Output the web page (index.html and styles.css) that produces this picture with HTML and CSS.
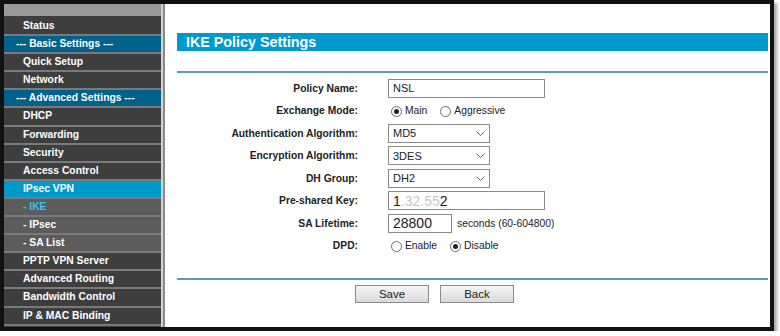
FILE: index.html
```html
<!DOCTYPE html>
<html lang="en">

<head>
  <meta charset="UTF-8" />
  <title>IKE Policy Settings</title>
  <link rel="stylesheet" href="styles.css">
</head>

<body>
  <div class="frame">
    <aside class="menu">
      <div class="menu-top"></div>
      <ul>
        <li>Status</li>
        <li class="group">--- Basic Settings ---</li>
        <li>Quick Setup</li>
        <li>Network</li>
        <li class="group">--- Advanced Settings ---</li>
        <li>DHCP</li>
        <li>Forwarding</li>
        <li>Security</li>
        <li>Access Control</li>
        <li class="active">IPsec VPN</li>
        <li class="sub current">- IKE</li>
        <li class="sub">- IPsec</li>
        <li class="sub">- SA List</li>
        <li>PPTP VPN Server</li>
        <li>Advanced Routing</li>
        <li>Bandwidth Control</li>
        <li>IP &amp; MAC Binding</li>
      </ul>
    </aside>
    <div class="divider"></div>

    <main class="content">
      <h2 class="title">IKE Policy Settings</h2>
      <div class="rule"></div>

      <div class="form">
        <div class="row">
          <span class="name">Policy Name:</span>
          <div class="field wide">NSL</div>
        </div>
        <div class="row">
          <span class="name">Exchange Mode:</span>
          <div class="choices">
            <span class="option"><span class="radio checked"></span>Main</span>
            <span class="option"><span class="radio"></span>Aggressive</span>
          </div>
        </div>
        <div class="row">
          <span class="name">Authentication Algorithm:</span>
          <div class="select"><span>MD5</span><svg width="9" height="5" viewBox="0 0 9 5"><path d="M0.5 0.5 L4.5 4.5 L8.5 0.5" fill="none" stroke="#666" stroke-width="1"/></svg></div>
        </div>
        <div class="row">
          <span class="name">Encryption Algorithm:</span>
          <div class="select"><span>3DES</span><svg width="9" height="5" viewBox="0 0 9 5"><path d="M0.5 0.5 L4.5 4.5 L8.5 0.5" fill="none" stroke="#666" stroke-width="1"/></svg></div>
        </div>
        <div class="row">
          <span class="name">DH Group:</span>
          <div class="select"><span>DH2</span><svg width="9" height="5" viewBox="0 0 9 5"><path d="M0.5 0.5 L4.5 4.5 L8.5 0.5" fill="none" stroke="#666" stroke-width="1"/></svg></div>
        </div>
        <div class="row">
          <span class="name">Pre-shared Key:</span>
          <div class="field wide big">1<span class="hidden">.32.55</span>2</div>
        </div>
        <div class="row">
          <span class="name">SA Lifetime:</span>
          <div class="inline">
            <div class="field short big">28800</div>
            <span class="hint">seconds (60-604800)</span>
          </div>
        </div>
        <div class="row">
          <span class="name">DPD:</span>
          <div class="choices">
            <span class="option"><span class="radio"></span>Enable</span>
            <span class="option"><span class="radio checked"></span>Disable</span>
          </div>
        </div>
      </div>

      <div class="rule bottom"></div>

      <div class="buttons">
        <button class="btn">Save</button>
        <button class="btn">Back</button>
      </div>
    </main>
  </div>
</body>

</html>
```

FILE: styles.css
```css
body {
  margin: 0;
  background: #fff;
  font-family: "Liberation Sans", Arial, sans-serif;
  overflow: hidden;
}

.frame {
  display: flex;
  width: 766px;
  height: 323px;
  border: 4px solid #111;
  background: #fff;
  box-shadow: 3px 3px 3px rgba(0, 0, 0, 0.35);
}

/* left menu */
.menu {
  width: 157px;
  background: #3e3e3e;
  overflow: hidden;
}

.menu-top {
  height: 12px;
  background: #9a9a9a;
  border-bottom: 2px solid #3e3e3e;
}

.menu ul {
  list-style: none;
  margin: 0;
  padding: 0;
}

.menu li {
  height: 16.1px;
  line-height: 16.1px;
  padding-left: 19px;
  border-bottom: 2px solid #7a7a7a;
  background: #3e3e3e;
  color: #fff;
  font-size: 10.3px;
  font-weight: bold;
  white-space: nowrap;
}

.menu li.group {
  padding-left: 12px;
  background: #00618a;
}

.menu li.active {
  background: #0099cc;
}

.menu li.sub {
  background: #5c5c5c;
}

.menu li.current {
  color: #33c4f2;
}

.divider {
  width: 2px;
  background: #d2d2d2;
  border-right: 2px solid #8a8a8a;
}

/* content */
.content {
  flex: 1;
  padding: 29px 2px 0 12px;
}

.title {
  margin: 0;
  height: 18px;
  line-height: 18px;
  padding-left: 9px;
  background: #0099cc;
  color: #fff;
  font-size: 14.3px;
  font-weight: bold;
}

.rule {
  margin-top: 20px;
  height: 2px;
  background: #5f9bb8;
}

.rule.bottom {
  margin-top: 21px;
}

.form {
  margin-top: 4px;
}

.row {
  display: grid;
  grid-template-columns: 181px 1fr;
  column-gap: 30px;
  align-items: center;
  height: 22.5px;
}

.name {
  text-align: right;
  color: #222;
  font-size: 10.3px;
  font-weight: bold;
}

.field,
.select {
  box-sizing: border-box;
  height: 19px;
  border: 1px solid #8a8a8a;
  display: flex;
  align-items: center;
  padding-left: 4px;
  color: #222;
  font-size: 11px;
}

.field.wide {
  width: 157px;
}

.field.short {
  width: 64px;
}

.field.big {
  font-size: 14px;
}

.hidden {
  color: #c8c8c8;
}

.select {
  width: 102px;
  justify-content: space-between;
  padding-right: 4px;
}

.inline {
  display: flex;
  align-items: center;
  gap: 5px;
}

.hint,
.option {
  color: #222;
  font-size: 10.3px;
}

.choices {
  display: flex;
  align-items: center;
  gap: 13px;
  padding-left: 3px;
}

.option {
  display: flex;
  align-items: center;
  gap: 3px;
}

.radio {
  box-sizing: border-box;
  width: 11px;
  height: 11px;
  margin-top: 2px;
  border: 1px solid #6b6b6b;
  border-radius: 50%;
  background: #fff;
  display: flex;
  align-items: center;
  justify-content: center;
}

.radio.checked::after {
  content: "";
  width: 5px;
  height: 5px;
  border-radius: 50%;
  background: #222;
}

.buttons {
  display: flex;
  gap: 11px;
  padding: 5px 0 0 178px;
}

.btn {
  width: 74px;
  height: 18px;
  padding: 0;
  border: 1px solid #8b8b8b;
  background: linear-gradient(#f6f6f6, #dadada);
  color: #222;
  font-family: inherit;
  font-size: 11.5px;
}
```
